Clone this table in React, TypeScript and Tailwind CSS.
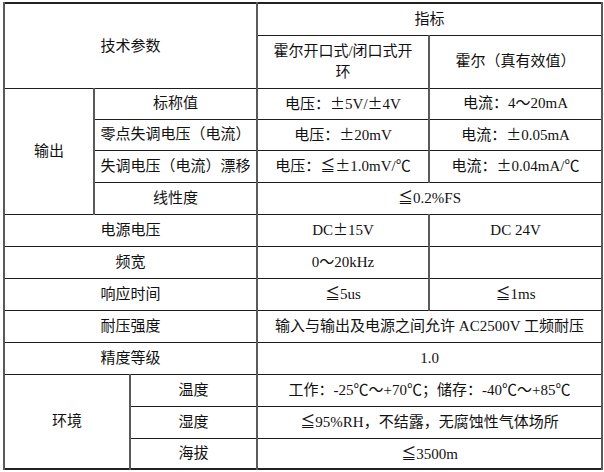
import React from 'react';

// spec table: grid lines at x 3/93/129/256/428/601, rows ~32px
const cell =
  'border-x-2 border-x-[#5a5a5a] border-y border-y-[#1e1e1e] text-center align-middle p-0 whitespace-nowrap';

const cjk = "font-['Noto_Sans_CJK_SC']";
const PM = () => <span className={`${cjk} inline-block w-[15px] text-center`}>±</span>;
const LE = () => <span className={cjk}>≦</span>;
const DEG = () => <span className={cjk}>℃</span>;

export default function App() {
  return (
    <div className="bg-white w-[604px] h-[472px] pl-[3px] pt-[2px] text-[15px] text-[#111] font-['Liberation_Serif','Noto_Sans_CJK_SC',serif]">
      <table className="border-collapse table-fixed w-[598px] border-2 border-[#222]">
        <colgroup>
          <col className="w-[90px]" />
          <col className="w-[36px]" />
          <col className="w-[127px]" />
          <col className="w-[172px]" />
          <col className="w-[173px]" />
        </colgroup>
        <tbody>
          <tr className="h-[32px]">
            <td className={cell} colSpan={3} rowSpan={2}>技术参数</td>
            <td className={cell} colSpan={2}>指标</td>
          </tr>
          <tr className="h-[53px]">
            <td className={`${cell} leading-[21px]`}>
              霍尔开口式/闭口式开
              <br />环
            </td>
            <td className={cell}>霍尔（真有效值）</td>
          </tr>
          <tr className="h-[31px]">
            <td className={cell} rowSpan={4}>输出</td>
            <td className={cell} colSpan={2}>标称值</td>
            <td className={cell}>电压：<PM />5V/<PM />4V</td>
            <td className={cell}>电流：4～20mA</td>
          </tr>
          <tr className="h-[31px]">
            <td className={cell} colSpan={2}>零点失调电压（电流）</td>
            <td className={cell}>电压：<PM />20mV</td>
            <td className={cell}>电流：<PM />0.05mA</td>
          </tr>
          <tr className="h-[32px]">
            <td className={cell} colSpan={2}>失调电压（电流）漂移</td>
            <td className={cell}>电压：<LE /><PM />1.0mV/<DEG /></td>
            <td className={cell}>电流：<PM />0.04mA/<DEG /></td>
          </tr>
          <tr className="h-[32px]">
            <td className={cell} colSpan={2}>线性度</td>
            <td className={cell} colSpan={2}><LE />0.2%FS</td>
          </tr>
          <tr className="h-[32px]">
            <td className={cell} colSpan={3}>电源电压</td>
            <td className={cell}>DC<PM />15V</td>
            <td className={cell}>DC 24V</td>
          </tr>
          <tr className="h-[32px]">
            <td className={cell} colSpan={3}>频宽</td>
            <td className={cell}>0～20kHz</td>
            <td className={cell}></td>
          </tr>
          <tr className="h-[32px]">
            <td className={cell} colSpan={3}>响应时间</td>
            <td className={cell}><LE />5us</td>
            <td className={cell}><LE />1ms</td>
          </tr>
          <tr className="h-[32px]">
            <td className={cell} colSpan={3}>耐压强度</td>
            <td className={cell} colSpan={2}>输入与输出及电源之间允许 AC2500V 工频耐压</td>
          </tr>
          <tr className="h-[32px]">
            <td className={cell} colSpan={3}>精度等级</td>
            <td className={cell} colSpan={2}>1.0</td>
          </tr>
          <tr className="h-[32px]">
            <td className={cell} colSpan={2} rowSpan={3}>环境</td>
            <td className={cell}>温度</td>
            <td className={cell} colSpan={2}>工作：-25<DEG />～+70<DEG />；储存：-40<DEG />～+85<DEG /></td>
          </tr>
          <tr className="h-[32px]">
            <td className={cell}>湿度</td>
            <td className={cell} colSpan={2}><LE />95%RH，不结露，无腐蚀性气体场所</td>
          </tr>
          <tr className="h-[31px]">
            <td className={cell}>海拔</td>
            <td className={cell} colSpan={2}><LE />3500m</td>
          </tr>
        </tbody>
      </table>
    </div>
  );
}
